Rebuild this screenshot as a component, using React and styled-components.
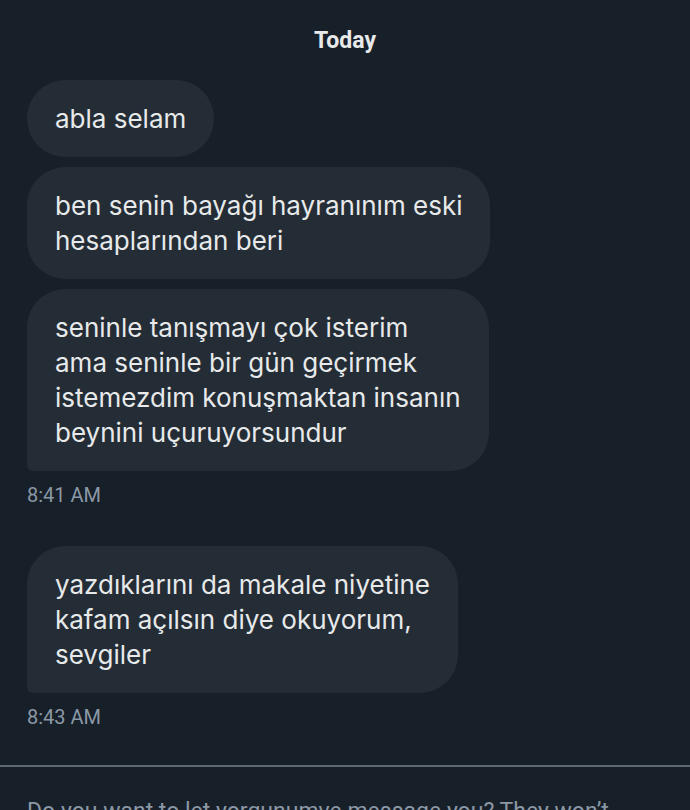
import styled, { createGlobalStyle } from "styled-components"

const GlobalStyle = createGlobalStyle`
    html, body {
        margin: 0;
        padding: 0;
        background-color: #171f29;
    }

    body {
        width: 690px;
        height: 810px;
        overflow: hidden;
    }
`

// lines are kept as they wrap in the screenshot
const groups = [
    {
        time: '8:41 AM',
        messages: [
            ['abla selam'],
            ['ben senin bayağı hayranınım eski', 'hesaplarından beri'],
            [
                'seninle tanışmayı çok isterim',
                'ama seninle bir gün geçirmek',
                'istemezdim konuşmaktan insanın',
                'beynini uçuruyorsundur',
            ],
        ],
    },
    {
        time: '8:43 AM',
        messages: [
            ['yazdıklarını da makale niyetine', 'kafam açılsın diye okuyorum,', 'sevgiler'],
        ],
    },
]

export default function App() {
    return (
        <Page>
            <GlobalStyle />
            <DayLabel>Today</DayLabel>
            <Thread>
                {groups.map((g, gi) =>
                    <Group key={gi}>
                        {g.messages.map((lines, i) =>
                            <Bubble key={i} $last={i === g.messages.length - 1}>
                                {lines.map((l, li) => <Line key={li}>{l}</Line>)}
                            </Bubble>
                        )}
                        <Time>{g.time}</Time>
                    </Group>
                )}
            </Thread>
            <Divider />
            <Request>
                Do you want to let yorgunumve message you? They won’t know you’ve seen their message until you accept.
            </Request>
        </Page>
    )
}

const Page = styled.div`
    width: 690px;
    height: 810px;
    overflow: hidden;
    background-color: #171f29;
    display: flex;
    flex-direction: column;
`

const DayLabel = styled.div`
    padding-top: 27px;
    height: 28px;
    text-align: center;
    font-family: Roboto, "Liberation Sans", sans-serif;
    font-weight: 700;
    font-size: 23px;
    line-height: 28px;
    color: #e7e9ea;
    margin-bottom: 25px;
`

const Thread = styled.div`
    display: flex;
    flex-direction: column;
    gap: 40px;
    padding: 0 27px;
`

const Group = styled.div`
    display: flex;
    flex-direction: column;
    align-items: flex-start;
    gap: 10px;
`

const Bubble = styled.div`
    box-sizing: border-box;
    padding: 21px 28px 21px;
    background-color: #242d36;
    border-radius: 38px;
    border-bottom-left-radius: ${props => props.$last ? '6px' : '38px'};

    font-family: Inter, "Noto Sans", sans-serif;
    font-size: 26px;
    line-height: 35px;
    color: #e7e9ea;
`

const Line = styled.div`
    white-space: nowrap;
`

const Time = styled.div`
    margin-top: 3px;
    font-family: Roboto, "Liberation Sans", sans-serif;
    font-size: 20px;
    line-height: 22px;
    color: #8b98a5;
`

const Divider = styled.div`
    height: 2px;
    background-color: #5d6871;
    margin-top: 37px;
    flex-shrink: 0;
`

const Request = styled.div`
    padding: 31px 27px 0;
    font-family: Roboto, "Liberation Sans", sans-serif;
    font-size: 23px;
    line-height: 28px;
    color: #8b98a5;
`
